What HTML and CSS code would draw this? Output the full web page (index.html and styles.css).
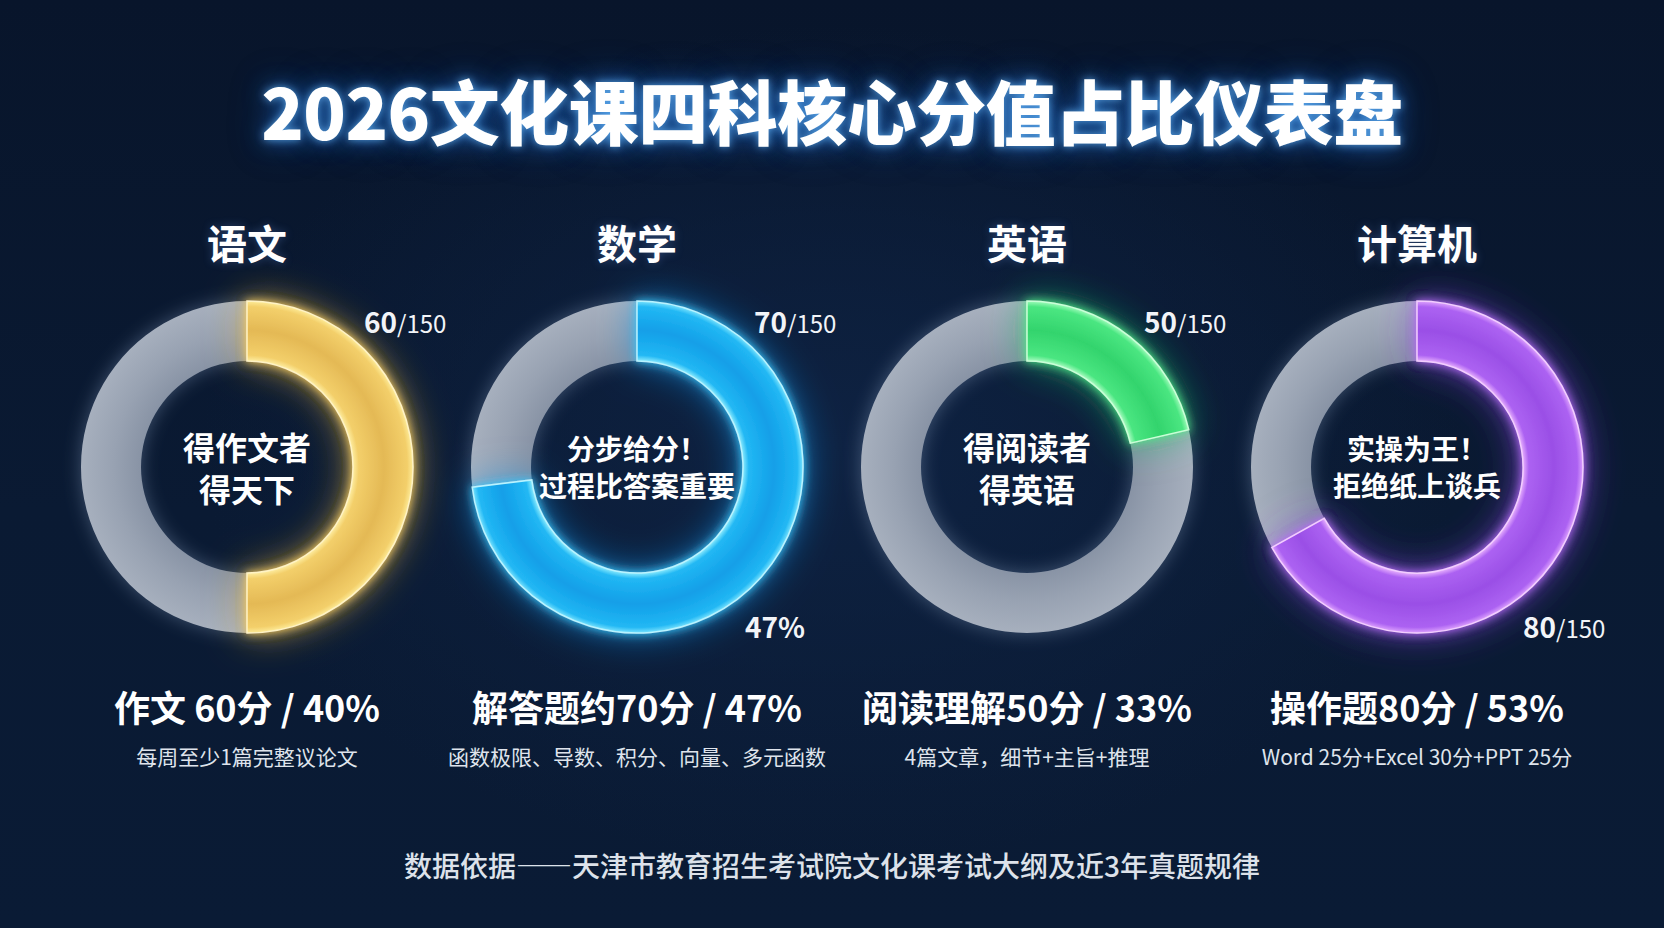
FILE: index.html
```html
<!DOCTYPE html>
<html lang="zh-CN">
<head>
<meta charset="utf-8">
<title>2026文化课四科核心分值占比仪表盘</title>
<link rel="stylesheet" href="styles.css">
</head>
<body>
<main class="page">
  <h1 class="title">2026文化课四科核心分值占比仪表盘</h1>
  <section class="grid">
    <div class="col">
      <h2 class="subject">语文</h2>
      <div class="dial">
        <svg class="ring" width="334" height="334" viewBox="0 0 334 334">
          <defs>
            <radialGradient id="g-gray1" gradientUnits="userSpaceOnUse" cx="167" cy="167" r="167">
              <stop offset="0.62" stop-color="#8792a4"/><stop offset="0.8" stop-color="#98a2b2"/><stop offset="1" stop-color="#a7b0be"/>
            </radialGradient>
            <radialGradient id="g-arc1" gradientUnits="userSpaceOnUse" cx="167" cy="167" r="167">
              <stop offset="0.63" stop-color="#fff1a8"/><stop offset="0.67" stop-color="#f3cf6a"/><stop offset="0.82" stop-color="#e4b955"/><stop offset="0.96" stop-color="#f3cf6a"/><stop offset="1" stop-color="#fff0a0"/>
            </radialGradient>
            <filter id="f-glow1" x="-40%" y="-40%" width="180%" height="180%">
              <feDropShadow dx="0" dy="0" stdDeviation="5" flood-color="#ffd257" flood-opacity="0.95"/>
              <feDropShadow dx="0" dy="0" stdDeviation="18" flood-color="#f5b52e" flood-opacity="0.6"/>
            </filter>
            <filter id="f-soft1" x="-20%" y="-20%" width="140%" height="140%">
              <feDropShadow dx="0" dy="0" stdDeviation="9" flood-color="#8fa6c6" flood-opacity="0.4"/>
            </filter>
          </defs>
          <path class="track" filter="url(#f-soft1)" fill="url(#g-gray1)" fill-rule="evenodd" d="M167,1 A166,166 0 1 1 166.99,1 Z M167,61 A106,106 0 1 0 167.01,61 Z"/>
          <path filter="url(#f-glow1)" fill="url(#g-arc1)" stroke="#fff3c4" stroke-width="1.5" d="M167,1 A166,166 0 0 1 167,333 L167,273 A106,106 0 0 0 167,61 Z"/>
        </svg>
        <p class="core">得作文者<br>得天下</p>
        <span class="score top">60<small>/150</small></span>
      </div>
      <p class="stat">作文 60分 / 40%</p>
      <p class="sub">每周至少1篇完整议论文</p>
    </div>

    <div class="col">
      <h2 class="subject">数学</h2>
      <div class="dial">
        <svg class="ring" width="334" height="334" viewBox="0 0 334 334">
          <defs>
            <radialGradient id="g-gray2" gradientUnits="userSpaceOnUse" cx="167" cy="167" r="167">
              <stop offset="0.62" stop-color="#8792a4"/><stop offset="0.8" stop-color="#98a2b2"/><stop offset="1" stop-color="#a7b0be"/>
            </radialGradient>
            <radialGradient id="g-arc2" gradientUnits="userSpaceOnUse" cx="167" cy="167" r="167">
              <stop offset="0.63" stop-color="#9af2ff"/><stop offset="0.67" stop-color="#22b8f4"/><stop offset="0.82" stop-color="#129fe8"/><stop offset="0.96" stop-color="#22b8f4"/><stop offset="1" stop-color="#8aeaff"/>
            </radialGradient>
            <filter id="f-glow2" x="-40%" y="-40%" width="180%" height="180%">
              <feDropShadow dx="0" dy="0" stdDeviation="5" flood-color="#2ccaff" flood-opacity="0.95"/>
              <feDropShadow dx="0" dy="0" stdDeviation="18" flood-color="#1594f0" flood-opacity="0.6"/>
            </filter>
            <filter id="f-soft2" x="-20%" y="-20%" width="140%" height="140%">
              <feDropShadow dx="0" dy="0" stdDeviation="9" flood-color="#8fa6c6" flood-opacity="0.4"/>
            </filter>
          </defs>
          <path class="track" filter="url(#f-soft2)" fill="url(#g-gray2)" fill-rule="evenodd" d="M167,1 A166,166 0 1 1 166.99,1 Z M167,61 A106,106 0 1 0 167.01,61 Z"/>
          <path filter="url(#f-glow2)" fill="url(#g-arc2)" stroke="#b8f4ff" stroke-width="1.5" d="M167,1 A166,166 0 1 1 2.24,187.23 L61.79,179.92 A106,106 0 1 0 167,61 Z"/>
        </svg>
        <p class="core small">分步给分！<br>过程比答案重要</p>
        <span class="score top">70<small>/150</small></span>
        <span class="score pct">47%</span>
      </div>
      <p class="stat">解答题约70分 / 47%</p>
      <p class="sub">函数极限、导数、积分、向量、多元函数</p>
    </div>

    <div class="col">
      <h2 class="subject">英语</h2>
      <div class="dial">
        <svg class="ring" width="334" height="334" viewBox="0 0 334 334">
          <defs>
            <radialGradient id="g-gray3" gradientUnits="userSpaceOnUse" cx="167" cy="167" r="167">
              <stop offset="0.62" stop-color="#8792a4"/><stop offset="0.8" stop-color="#98a2b2"/><stop offset="1" stop-color="#a7b0be"/>
            </radialGradient>
            <radialGradient id="g-arc3" gradientUnits="userSpaceOnUse" cx="167" cy="167" r="167">
              <stop offset="0.63" stop-color="#b8ffcb"/><stop offset="0.67" stop-color="#4ae681"/><stop offset="0.82" stop-color="#33d46d"/><stop offset="0.96" stop-color="#4ae681"/><stop offset="1" stop-color="#adffc4"/>
            </radialGradient>
            <filter id="f-glow3" x="-40%" y="-40%" width="180%" height="180%">
              <feDropShadow dx="0" dy="0" stdDeviation="5" flood-color="#46f585" flood-opacity="0.95"/>
              <feDropShadow dx="0" dy="0" stdDeviation="18" flood-color="#22c860" flood-opacity="0.6"/>
            </filter>
            <filter id="f-soft3" x="-20%" y="-20%" width="140%" height="140%">
              <feDropShadow dx="0" dy="0" stdDeviation="9" flood-color="#8fa6c6" flood-opacity="0.4"/>
            </filter>
          </defs>
          <path class="track" filter="url(#f-soft3)" fill="url(#g-gray3)" fill-rule="evenodd" d="M167,1 A166,166 0 1 1 166.99,1 Z M167,61 A106,106 0 1 0 167.01,61 Z"/>
          <path filter="url(#f-glow3)" fill="url(#g-arc3)" stroke="#c9ffd8" stroke-width="1.5" d="M167,1 A166,166 0 0 1 328.75,129.66 L270.28,143.15 A106,106 0 0 0 167,61 Z"/>
        </svg>
        <p class="core">得阅读者<br>得英语</p>
        <span class="score top">50<small>/150</small></span>
      </div>
      <p class="stat">阅读理解50分 / 33%</p>
      <p class="sub">4篇文章，细节+主旨+推理</p>
    </div>

    <div class="col">
      <h2 class="subject">计算机</h2>
      <div class="dial">
        <svg class="ring" width="334" height="334" viewBox="0 0 334 334">
          <defs>
            <radialGradient id="g-gray4" gradientUnits="userSpaceOnUse" cx="167" cy="167" r="167">
              <stop offset="0.62" stop-color="#8792a4"/><stop offset="0.8" stop-color="#98a2b2"/><stop offset="1" stop-color="#a7b0be"/>
            </radialGradient>
            <radialGradient id="g-arc4" gradientUnits="userSpaceOnUse" cx="167" cy="167" r="167">
              <stop offset="0.63" stop-color="#f0bcff"/><stop offset="0.67" stop-color="#ac62f2"/><stop offset="0.82" stop-color="#9a4fe6"/><stop offset="0.96" stop-color="#ac62f2"/><stop offset="1" stop-color="#e6adff"/>
            </radialGradient>
            <filter id="f-glow4" x="-40%" y="-40%" width="180%" height="180%">
              <feDropShadow dx="0" dy="0" stdDeviation="5" flood-color="#bd66ff" flood-opacity="0.95"/>
              <feDropShadow dx="0" dy="0" stdDeviation="18" flood-color="#8a3de8" flood-opacity="0.6"/>
            </filter>
            <filter id="f-soft4" x="-20%" y="-20%" width="140%" height="140%">
              <feDropShadow dx="0" dy="0" stdDeviation="9" flood-color="#8fa6c6" flood-opacity="0.4"/>
            </filter>
          </defs>
          <path class="track" filter="url(#f-soft4)" fill="url(#g-gray4)" fill-rule="evenodd" d="M167,1 A166,166 0 1 1 166.99,1 Z M167,61 A106,106 0 1 0 167.01,61 Z"/>
          <path filter="url(#f-glow4)" fill="url(#g-arc4)" stroke="#f3cdff" stroke-width="1.5" d="M167,1 A166,166 0 1 1 21.81,247.48 L74.29,218.39 A106,106 0 1 0 167,61 Z"/>
        </svg>
        <p class="core small">实操为王！<br>拒绝纸上谈兵</p>
        <span class="score bottom">80<small>/150</small></span>
      </div>
      <p class="stat">操作题80分 / 53%</p>
      <p class="sub">Word 25分+Excel 30分+PPT 25分</p>
    </div>
  </section>
  <footer class="footer">数据依据——天津市教育招生考试院文化课考试大纲及近3年真题规律</footer>
</main>
</body>
</html>
```

FILE: styles.css
```css
html, body {
  margin: 0;
  padding: 0;
}
body {
  width: 1664px;
  height: 928px;
  overflow: hidden;
  background:
    radial-gradient(ellipse 900px 600px at 50% 48%, #0e2242 0%, rgba(11,28,52,0) 70%),
    linear-gradient(180deg, #08152b 0%, #0a1a33 55%, #0a1b35 100%);
  color: #ffffff;
  font-family: "Noto Sans CJK SC", "Noto Sans", sans-serif;
}
.page {
  display: flex;
  flex-direction: column;
  align-items: center;
  height: 928px;
}
.title {
  margin: 0;
  padding-top: 65px;
  font-size: 70px;
  line-height: 90px;
  font-weight: 900;
  letter-spacing: -0.5px;
  color: #ffffff;
  text-shadow: 0 0 8px rgba(110, 190, 255, 0.75), 0 0 22px rgba(40, 140, 255, 0.55), 0 0 40px rgba(30, 110, 230, 0.35);
}
.grid {
  display: grid;
  grid-template-columns: repeat(4, 390px);
  margin-top: 62px;
}
.col {
  display: flex;
  flex-direction: column;
  align-items: center;
}
.subject {
  margin: 0;
  font-size: 40px;
  line-height: 50px;
  font-weight: 700;
  color: #ffffff;
  text-shadow: 0 0 10px rgba(120, 170, 255, 0.3);
}
.dial {
  position: relative;
  width: 334px;
  height: 334px;
  margin-top: 33px;
}
.ring {
  display: block;
  overflow: visible;
}
.core {
  position: absolute;
  inset: 0;
  margin: 0;
  display: flex;
  align-items: center;
  justify-content: center;
  text-align: center;
  font-size: 32px;
  line-height: 42px;
  font-weight: 700;
  color: #ffffff;
}
.core.small {
  font-size: 28px;
  line-height: 37px;
}
.score {
  position: absolute;
  font-size: 28px;
  line-height: 34px;
  font-weight: 700;
  color: #f2f4f8;
  white-space: nowrap;
}
.score small {
  font-size: 24px;
  font-weight: 400;
}
.score.top {
  left: 284px;
  top: 4px;
}
.score.pct {
  left: 275px;
  top: 309px;
}
.score.bottom {
  left: 273px;
  top: 309px;
}
.stat {
  margin: 49px 0 0;
  font-size: 36px;
  line-height: 46px;
  font-weight: 700;
  color: #ffffff;
  white-space: nowrap;
}
.sub {
  margin: 12px 0 0;
  font-size: 21px;
  line-height: 30px;
  font-weight: 400;
  color: #dfe4ec;
  white-space: nowrap;
}
.footer {
  margin-top: 76px;
  font-size: 28px;
  line-height: 36px;
  font-weight: 500;
  color: #dde2ea;
}
```
